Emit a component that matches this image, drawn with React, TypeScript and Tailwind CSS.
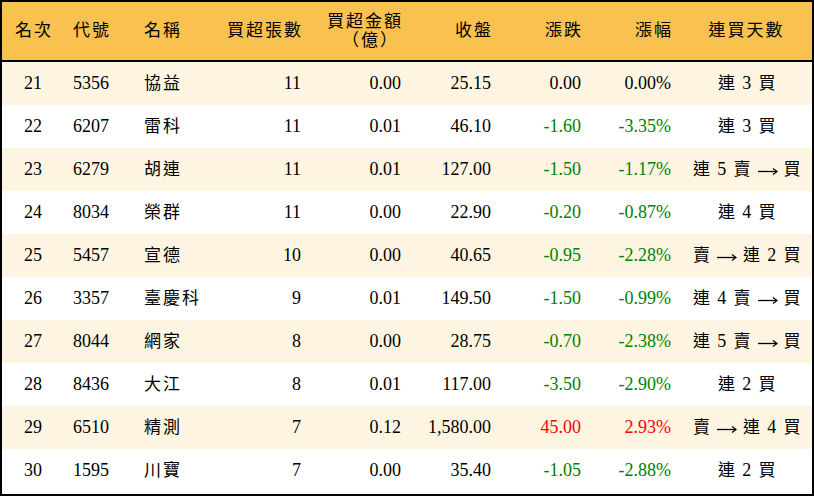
import React from 'react';

type Row = {
  rank: number;
  code: string;
  name: string;
  lots: number;
  amount: string;
  close: string;
  change: string;
  pct: string;
  streak: string;
};

const rows: Row[] = [
  { rank: 21, code: '5356', name: '協益', lots: 11, amount: '0.00', close: '25.15', change: '0.00', pct: '0.00%', streak: '連 3 買' },
  { rank: 22, code: '6207', name: '雷科', lots: 11, amount: '0.01', close: '46.10', change: '-1.60', pct: '-3.35%', streak: '連 3 買' },
  { rank: 23, code: '6279', name: '胡連', lots: 11, amount: '0.01', close: '127.00', change: '-1.50', pct: '-1.17%', streak: '連 5 賣 → 買' },
  { rank: 24, code: '8034', name: '榮群', lots: 11, amount: '0.00', close: '22.90', change: '-0.20', pct: '-0.87%', streak: '連 4 買' },
  { rank: 25, code: '5457', name: '宣德', lots: 10, amount: '0.00', close: '40.65', change: '-0.95', pct: '-2.28%', streak: '賣 → 連 2 買' },
  { rank: 26, code: '3357', name: '臺慶科', lots: 9, amount: '0.01', close: '149.50', change: '-1.50', pct: '-0.99%', streak: '連 4 賣 → 買' },
  { rank: 27, code: '8044', name: '網家', lots: 8, amount: '0.00', close: '28.75', change: '-0.70', pct: '-2.38%', streak: '連 5 賣 → 買' },
  { rank: 28, code: '8436', name: '大江', lots: 8, amount: '0.01', close: '117.00', change: '-3.50', pct: '-2.90%', streak: '連 2 買' },
  { rank: 29, code: '6510', name: '精測', lots: 7, amount: '0.12', close: '1,580.00', change: '45.00', pct: '2.93%', streak: '賣 → 連 4 買' },
  { rank: 30, code: '1595', name: '川寶', lots: 7, amount: '0.00', close: '35.40', change: '-1.05', pct: '-2.88%', streak: '連 2 買' },
];

const cols = 'grid grid-cols-[62px_70px_80px_97px_100px_90px_90px_90px_131px]';
const cjk = 'tracking-[2px]';

const tone = (v: string) => {
  if (v.startsWith('-')) return 'text-[#008000]';
  if (/^0\.00/.test(v)) return 'text-black';
  return 'text-[#ff0000]';
};

const Arrow = () => (
  <svg width="20" height="10" viewBox="0 0 20 10" className="inline-block align-middle">
    <path d="M0 5.5H18.5" stroke="black" strokeWidth="1.3" />
    <path d="M15 2.5L19 5.5L15 8.5" fill="none" stroke="black" strokeWidth="1.2" />
  </svg>
);

const Streak = ({ text }: { text: string }) => (
  <span className="whitespace-pre tracking-[1.5px]">
    {text.split(' ').map((t, i) => (
      <React.Fragment key={i}>
        {i > 0 && ' '}
        {t === '→' ? <Arrow /> : /\d/.test(t) ? <span className="text-[18px]">{t}</span> : t}
      </React.Fragment>
    ))}
  </span>
);

export default function App() {
  return (
    <div
      className="w-[814px] h-[496px] border-2 border-black bg-white text-black text-[18px] overflow-hidden"
      style={{ fontFamily: '"Liberation Serif", "Noto Sans CJK TC", serif' }}
    >
      <div className={`${cols} h-[60px] bg-[#f9c14f] border-b-2 border-black items-center text-[17px] ${cjk}`}>
        <div className="text-center pl-[2px]">名次</div>
        <div className="pl-[9px]">代號</div>
        <div className="pl-[10px]">名稱</div>
        <div className="text-right pr-[8px]">買超張數</div>
        <div className="text-right pr-[8px] leading-[19px]">
          <div>買超金額</div>
          <div className="pr-[4px]">（億）</div>
        </div>
        <div className="text-right pr-[8px]">收盤</div>
        <div className="text-right pr-[8px]">漲跌</div>
        <div className="text-right pr-[8px]">漲幅</div>
        <div className="text-center">連買天數</div>
      </div>
      {rows.map((r, i) => (
        <div
          key={r.rank}
          className={`${cols} h-[43px] items-center ${i % 2 === 0 ? 'bg-[#fdf5e2]' : 'bg-white'}`}
        >
          <div className="text-center">{r.rank}</div>
          <div className="pl-[9px]">{r.code}</div>
          <div className={`pl-[10px] text-[17px] ${cjk}`}>{r.name}</div>
          <div className="text-right pr-[10px]">{r.lots}</div>
          <div className="text-right pr-[10px]">{r.amount}</div>
          <div className="text-right pr-[10px]">{r.close}</div>
          <div className={`text-right pr-[10px] ${tone(r.change)}`}>{r.change}</div>
          <div className={`text-right pr-[10px] ${tone(r.pct)}`}>{r.pct}</div>
          <div className="text-center text-[17px] pl-[2px]">
            <Streak text={r.streak} />
          </div>
        </div>
      ))}
    </div>
  );
}
